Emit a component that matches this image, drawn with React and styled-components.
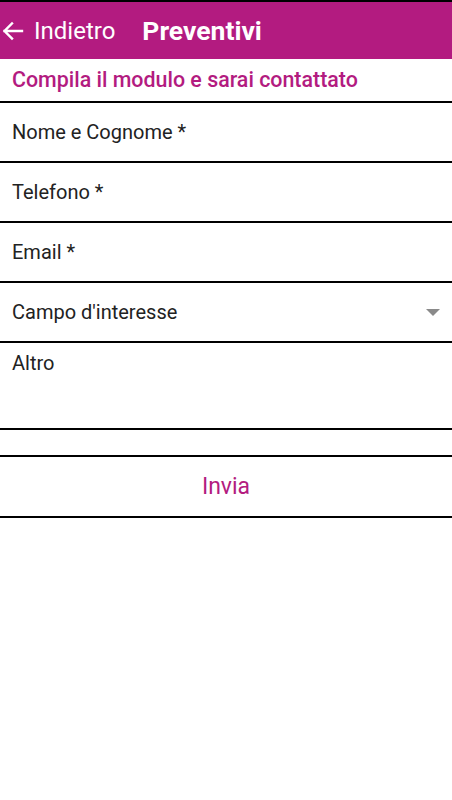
import React, { useState } from 'react';
import styled, { createGlobalStyle } from 'styled-components';

const GlobalStyle = createGlobalStyle`
  body {
    margin: 0;
    background: #fff;
    font-family: Roboto, "Noto Sans", sans-serif;
  }
  * { box-sizing: border-box; }
`;

const Page = styled.div`
  width: 100%;
  min-height: 800px;
  background: #fff;
  border-top: 2px solid #000;
`;

const Header = styled.header`
  height: 57px;
  background: #b31b80;
  display: flex;
  align-items: center;
  color: #fff;
`;

const BackButton = styled.button`
  display: flex;
  align-items: center;
  gap: 9px;
  padding: 0 0 0 1px;
  background: none;
  border: none;
  color: #fff;
  font-family: inherit;
  font-size: 24px;
  cursor: pointer;
`;

const Title = styled.h1`
  margin: 0 0 0 27px;
  font-size: 26.5px;
  font-weight: 700;
`;

const Subtitle = styled.div`
  height: 44px;
  padding: 0 12px 1px;
  display: flex;
  align-items: center;
  color: #b31b80;
  font-size: 21.4px;
  font-weight: 500;
  border-bottom: 2px solid #000;
`;

const Field = styled.div`
  position: relative;
  height: ${({ $tall }) => ($tall ? '87px' : '60px')};
  border-bottom: 2px solid #000;
  display: flex;
  align-items: ${({ $tall }) => ($tall ? 'flex-start' : 'center')};
`;

const Input = styled.input`
  width: 100%;
  height: 100%;
  border: none;
  outline: none;
  padding: 0 12px;
  font-family: inherit;
  font-size: 20px;
  color: #222;
  background: transparent;
  &::placeholder { color: #222; }
`;

const Area = styled.textarea`
  width: 100%;
  height: 100%;
  border: none;
  outline: none;
  resize: none;
  padding: 8px 12px;
  font-family: inherit;
  font-size: 20px;
  color: #222;
  background: transparent;
  &::placeholder { color: #222; }
`;

const Select = styled.select`
  width: 100%;
  height: 100%;
  border: none;
  outline: none;
  appearance: none;
  padding: 0 12px;
  font-family: inherit;
  font-size: 20px;
  color: #222;
  background: transparent;
`;

const Caret = styled.span`
  position: absolute;
  right: 12px;
  top: 50%;
  margin-top: -3px;
  width: 0;
  height: 0;
  border-left: 7px solid transparent;
  border-right: 7px solid transparent;
  border-top: 7px solid #8a8a8a;
  pointer-events: none;
`;

const Spacer = styled.div`
  height: 27px;
  border-bottom: 2px solid #000;
`;

const Submit = styled.button`
  width: 100%;
  height: 61px;
  border: none;
  border-bottom: 2px solid #000;
  background: #fff;
  color: #b31b80;
  font-family: inherit;
  font-size: 23px;
  cursor: pointer;
`;

const ArrowLeft = () => (
  <svg width="24" height="24" viewBox="0 0 24 24" fill="none" stroke="#fff" strokeWidth="2.4" strokeLinecap="square">
    <path d="M21 12H3.5M11 4.5L3.5 12l7.5 7.5" />
  </svg>
);

export default function App() {
  const [form, setForm] = useState({ nome: '', telefono: '', email: '', campo: '', altro: '' });
  const handle = (e) => setForm({ ...form, [e.target.name]: e.target.value });

  return (
    <Page>
      <GlobalStyle />
      <Header>
        <BackButton>
          <ArrowLeft />
          Indietro
        </BackButton>
        <Title>Preventivi</Title>
      </Header>
      <Subtitle>Compila il modulo e sarai contattato</Subtitle>
      <form onSubmit={(e) => e.preventDefault()}>
        <Field>
          <Input name="nome" placeholder="Nome e Cognome *" value={form.nome} onChange={handle} />
        </Field>
        <Field>
          <Input name="telefono" placeholder="Telefono *" value={form.telefono} onChange={handle} />
        </Field>
        <Field>
          <Input name="email" placeholder="Email *" value={form.email} onChange={handle} />
        </Field>
        <Field>
          <Select name="campo" value={form.campo} onChange={handle}>
            <option value="">Campo d'interesse</option>
          </Select>
          <Caret />
        </Field>
        <Field $tall>
          <Area name="altro" placeholder="Altro" value={form.altro} onChange={handle} />
        </Field>
        <Spacer />
        <Submit type="submit">Invia</Submit>
      </form>
    </Page>
  );
}
